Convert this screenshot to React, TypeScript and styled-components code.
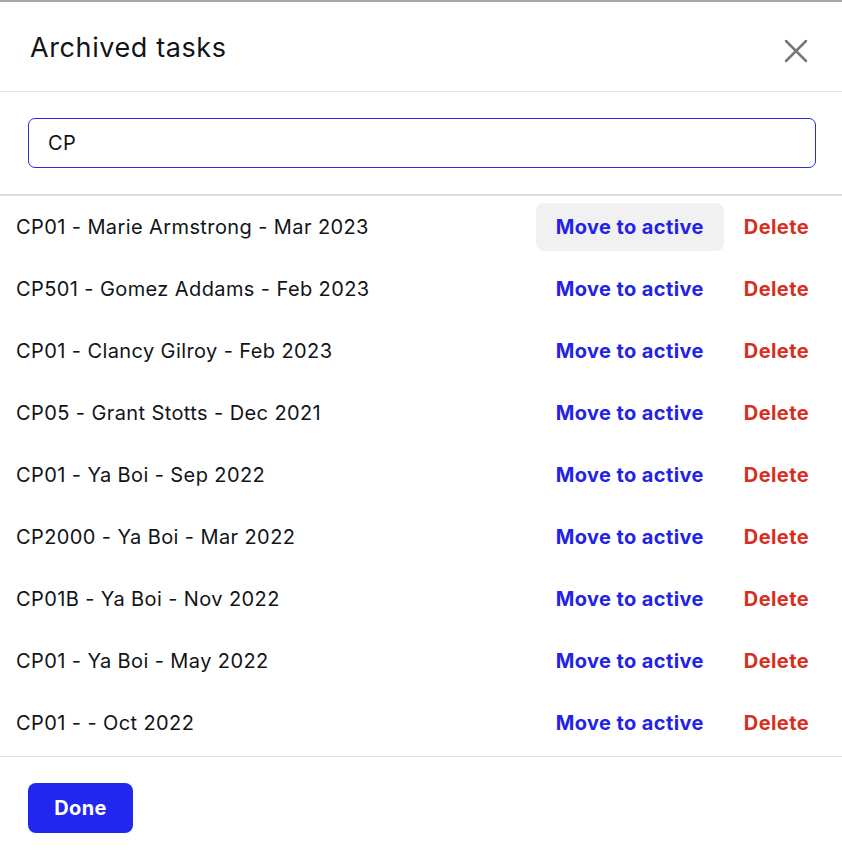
import styled, { createGlobalStyle } from 'styled-components';

const GlobalStyle = createGlobalStyle`
  html, body {
    margin: 0;
    padding: 0;
    background: #fff;
  }

  body {
    font-family: Inter, 'Noto Sans', sans-serif;
    color: #111418;
  }
`;

const Dialog = styled.div`
  border-top: 2px solid #a7a7a7;
  box-sizing: border-box;
  display: flex;
  flex-direction: column;
  height: 852px;
  width: 842px;
`;

const Header = styled.div`
  align-items: center;
  border-bottom: 1px solid #e6e6e6;
  box-sizing: border-box;
  display: flex;
  height: 90px;
  justify-content: space-between;
  padding: 0 30px;
`;

const Title = styled.h2`
  font-size: 27px;
  font-weight: 400;
  letter-spacing: 0.6px;
  margin: 2px 0 0;
`;

const CloseButton = styled.button`
  align-items: center;
  background: none;
  border: none;
  cursor: pointer;
  display: flex;
  height: 32px;
  justify-content: center;
  margin-top: 8px;
  padding: 0;
  width: 32px;
`;

const SearchArea = styled.div`
  border-bottom: 2px solid #dedede;
  padding: 26px 26px 26px 28px;
`;

const SearchInput = styled.input`
  border: 1px solid #2a2ad8;
  border-radius: 7px;
  box-sizing: border-box;
  color: #111418;
  font-family: inherit;
  font-size: 20px;
  height: 50px;
  letter-spacing: 0.4px;
  outline: none;
  padding: 0 19px;
  width: 100%;
`;

const List = styled.ul`
  flex: 1;
  list-style: none;
  margin: 0;
  padding: 0;
`;

const Row = styled.li`
  align-items: center;
  display: flex;
  height: 62px;
  padding: 0 13px 0 16px;
`;

const Label = styled.span`
  flex: 1;
  font-size: 20px;
  letter-spacing: 0.4px;
`;

const ActionButton = styled.button<{ $tone: 'primary' | 'danger'; $hover?: boolean }>`
  background: ${({ $hover }) => ($hover ? '#f1f1f1' : 'transparent')};
  border: none;
  border-radius: 8px;
  color: ${({ $tone }) => ($tone === 'primary' ? '#2323e6' : '#d5301f')};
  cursor: pointer;
  font-family: inherit;
  font-size: 20px;
  font-weight: 700;
  height: 48px;
  letter-spacing: 0.4px;
  padding: 0 20px;
`;

const Footer = styled.div`
  border-top: 1px solid #e2e2e2;
  box-sizing: border-box;
  height: 96px;
  padding: 26px 28px;
`;

const DoneButton = styled.button`
  background: #2127f0;
  border: none;
  border-radius: 8px;
  color: #fff;
  cursor: pointer;
  font-family: inherit;
  font-size: 20px;
  font-weight: 700;
  height: 50px;
  letter-spacing: 0.4px;
  width: 105px;
`;

const tasks = [
  'CP01 - Marie Armstrong - Mar 2023',
  'CP501 - Gomez Addams - Feb 2023',
  'CP01 - Clancy Gilroy - Feb 2023',
  'CP05 - Grant Stotts - Dec 2021',
  'CP01 - Ya Boi - Sep 2022',
  'CP2000 - Ya Boi - Mar 2022',
  'CP01B - Ya Boi - Nov 2022',
  'CP01 - Ya Boi - May 2022',
  'CP01 - - Oct 2022',
];

const CloseIcon = () => (
  <svg width="24" height="24" viewBox="0 0 24 24" fill="none">
    <path d="M2 2L22 22M22 2L2 22" stroke="#777" strokeWidth="2.5" strokeLinecap="round" />
  </svg>
);

export default function App() {
  return (
    <>
      <GlobalStyle />
      <Dialog>
        <Header>
          <Title>Archived tasks</Title>
          <CloseButton aria-label="Close">
            <CloseIcon />
          </CloseButton>
        </Header>

        <SearchArea>
          <SearchInput defaultValue="CP" />
        </SearchArea>

        <List>
          {tasks.map((task, i) => (
            <Row key={`${task}-${i}`}>
              <Label>{task}</Label>
              <ActionButton $tone="primary" $hover={i === 0}>
                Move to active
              </ActionButton>
              <ActionButton $tone="danger">Delete</ActionButton>
            </Row>
          ))}
        </List>

        <Footer>
          <DoneButton>Done</DoneButton>
        </Footer>
      </Dialog>
    </>
  );
}
